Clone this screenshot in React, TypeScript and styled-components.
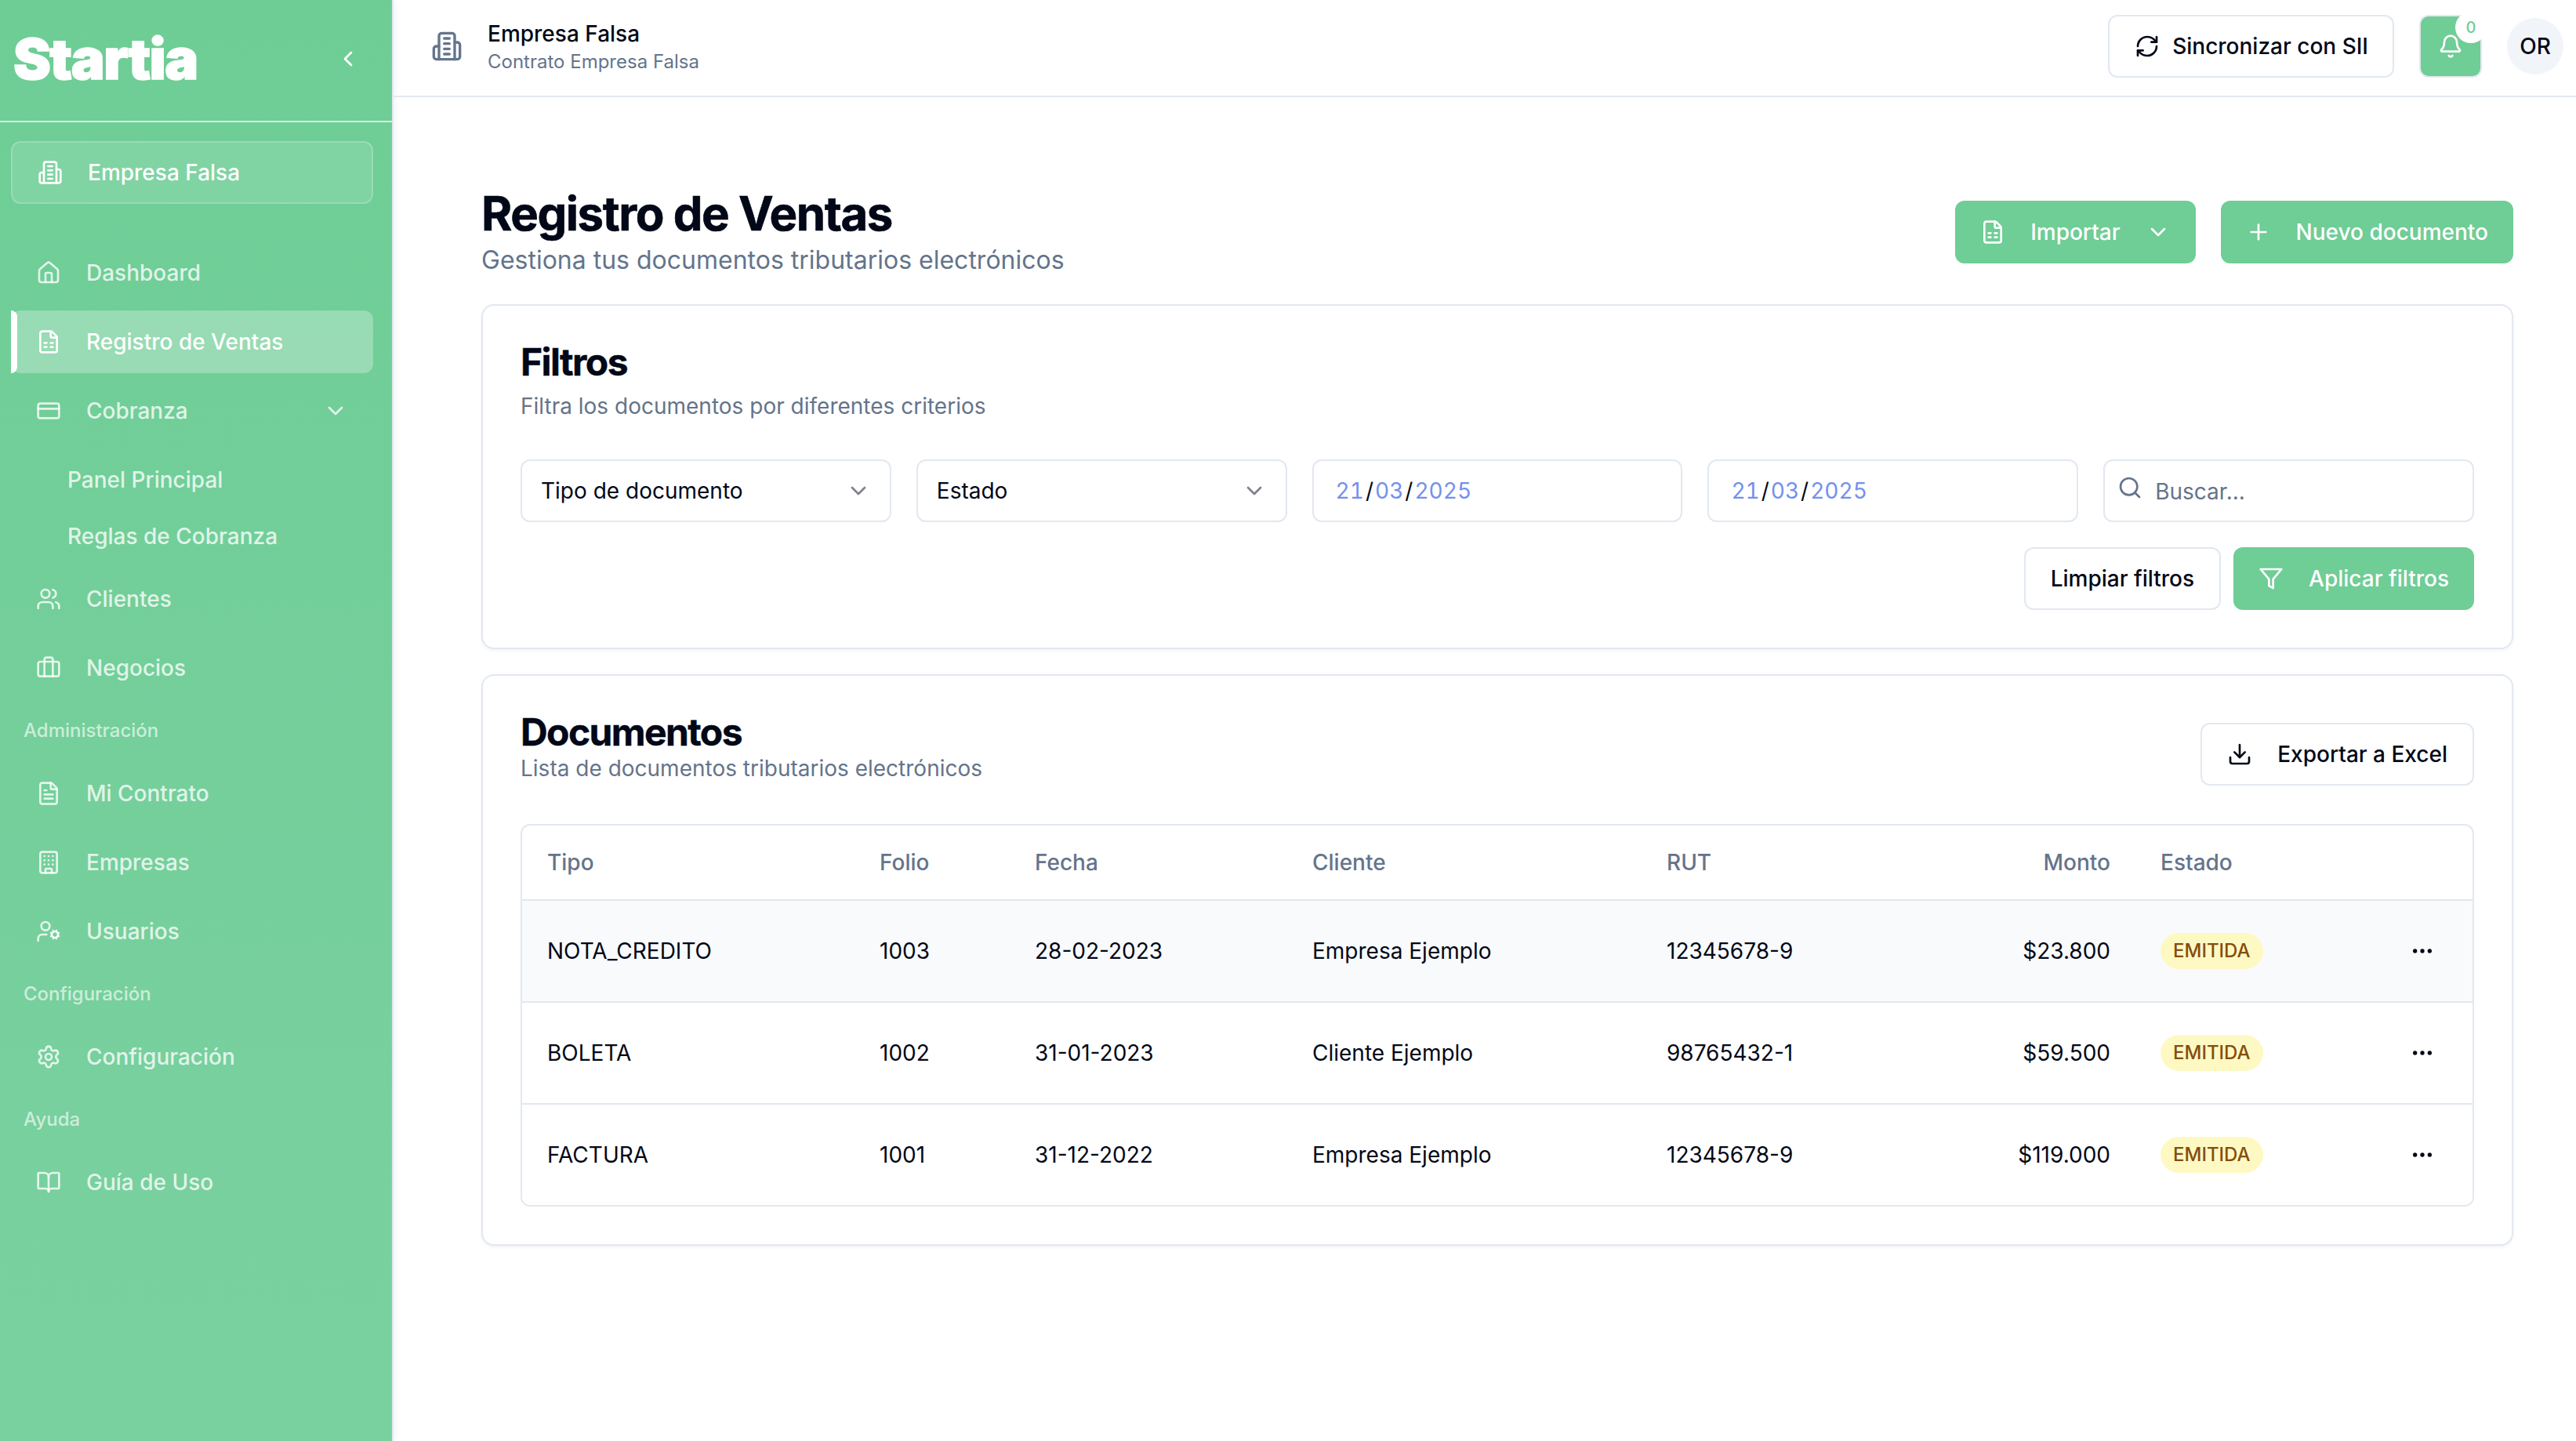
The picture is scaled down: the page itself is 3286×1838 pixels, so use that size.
import styled, { createGlobalStyle } from 'styled-components';
import {
  Bell,
  BookOpen,
  Briefcase,
  Building,
  ChevronDown,
  ChevronLeft,
  CreditCard,
  Download,
  Ellipsis,
  FileSpreadsheet,
  FileText,
  Home,
  Plus,
  RefreshCw,
  Search,
  Settings,
  UserCog,
  Users,
} from 'lucide-react';

const GREEN = '#6fcd96';
const BORDER = '#e2e8f0';
const MUTED = '#64748b';
const INK = '#020817';

const GlobalStyle = createGlobalStyle`
  * {
    box-sizing: border-box;
  }

  html,
  body {
    margin: 0;
    padding: 0;
    height: 100%;
    background: #fff;
    color: ${INK};
    font-family: Inter, "Liberation Sans", sans-serif;
    font-size: 28px;
    line-height: 40px;
  }
`;

const Page = styled.div`
  display: flex;
  height: 100vh;
  overflow: hidden;
`;

const Sidebar = styled.aside`
  flex: 0 0 502px;
  display: flex;
  flex-direction: column;
  border-right: 2px solid ${BORDER};
  background: linear-gradient(180deg, #6ecd95 0%, #7ad1a0 100%);
  background-clip: padding-box;
  box-shadow: 2px 0 8px rgba(15, 23, 42, 0.05);
  color: #fff;
  font-weight: 500;
`;

const SidebarHead = styled.div`
  flex: 0 0 156px;
  display: flex;
  align-items: center;
  justify-content: space-between;
  padding: 0 40px 4px 17px;
  border-bottom: 2px solid rgba(255, 255, 255, 0.72);
`;

const Logo = styled.div`
  font-size: 72px;
  line-height: 80px;
  font-weight: 900;
  letter-spacing: -1.6px;
  -webkit-text-stroke: 1.5px #fff;
`;

const Company = styled.div`
  display: flex;
  align-items: center;
  gap: 32px;
  height: 80px;
  margin: 24px 24px 0 14px;
  padding: 0 32px;
  border: 2px solid rgba(255, 255, 255, 0.2);
  border-radius: 12px;
  background: rgba(255, 255, 255, 0.12);
`;

const Nav = styled.nav`
  display: flex;
  flex-direction: column;
  gap: 8px;
  margin-top: 48px;
  padding: 0 24px 0 14px;
`;

const NavItem = styled.a<{ $active?: boolean }>`
  position: relative;
  display: flex;
  align-items: center;
  gap: 32px;
  height: 80px;
  padding: 0 32px;
  border-radius: 12px;
  color: ${(p) => (p.$active ? '#fff' : 'rgba(255, 255, 255, 0.8)')};
  background: ${(p) => (p.$active ? 'rgba(255, 255, 255, 0.28)' : 'transparent')};

  ${(p) =>
    p.$active &&
    `
    &::before {
      content: '';
      position: absolute;
      left: 0;
      top: 0;
      bottom: 0;
      width: 8px;
      border-radius: 0 8px 8px 0;
      background: #fff;
    }
  `}
`;

const NavCaret = styled(ChevronDown)`
  margin-left: auto;
`;

const SubNav = styled.div`
  display: flex;
  flex-direction: column;
  gap: 8px;
  padding-top: 8px;
`;

const SubItem = styled.a`
  display: flex;
  align-items: center;
  height: 64px;
  padding-left: 72px;
  color: rgba(255, 255, 255, 0.8);
`;

const NavLabel = styled.div`
  display: flex;
  align-items: center;
  height: 64px;
  padding-left: 16px;
  font-size: 24px;
  color: rgba(255, 255, 255, 0.65);
`;

const Main = styled.div`
  flex: 1;
  min-width: 0;
  display: flex;
  flex-direction: column;
`;

const TopBar = styled.header`
  flex: 0 0 124px;
  display: flex;
  align-items: center;
  justify-content: space-between;
  padding: 0 16px 4px 48px;
  border-bottom: 2px solid ${BORDER};
`;

const TopLeft = styled.div`
  display: flex;
  align-items: center;
  gap: 32px;
  color: ${MUTED};
`;

const TopName = styled.div`
  color: ${INK};
  font-weight: 500;
`;

const TopContract = styled.div`
  font-size: 24px;
  line-height: 32px;
  color: ${MUTED};
`;

const TopRight = styled.div`
  display: flex;
  align-items: center;
  gap: 32px;
`;

const Button = styled.button<{ $primary?: boolean }>`
  display: inline-flex;
  align-items: center;
  gap: 32px;
  height: 80px;
  padding: 0 32px;
  border: ${(p) => (p.$primary ? '0' : `2px solid ${BORDER}`)};
  border-radius: 12px;
  background: ${(p) => (p.$primary ? GREEN : '#fff')};
  color: ${(p) => (p.$primary ? '#fff' : INK)};
  font: inherit;
  font-weight: 500;
  white-space: nowrap;
`;

const SyncButton = styled(Button)`
  gap: 16px;
  padding: 0 31px 0 32px;
`;

const BellButton = styled(Button)`
  position: relative;
  justify-content: center;
  width: 80px;
  padding: 0;
  border: 2px solid ${BORDER};
  background: ${GREEN};
  color: #fff;
`;

const BellCount = styled.span`
  position: absolute;
  top: -6px;
  right: -8px;
  display: flex;
  align-items: center;
  justify-content: center;
  width: 40px;
  height: 40px;
  border-radius: 50%;
  background: #fff;
  color: ${GREEN};
  font-size: 20px;
  line-height: 24px;
  font-weight: 500;
`;

const Avatar = styled.div`
  display: flex;
  align-items: center;
  justify-content: center;
  width: 72px;
  height: 72px;
  border-radius: 50%;
  background: #f1f5f9;
  font-weight: 500;
`;

const Content = styled.main`
  display: flex;
  flex-direction: column;
  gap: 32px;
  padding: 112px 80px 0 112px;
`;

const PageHead = styled.div`
  display: flex;
  align-items: center;
  justify-content: space-between;
`;

const PageTitle = styled.h1`
  margin: 0;
  font-size: 60px;
  line-height: 72px;
  font-weight: 700;
  letter-spacing: -1.5px;
  -webkit-text-stroke: 0.6px ${INK};
`;

const PageSub = styled.p`
  margin: 0;
  font-size: 32px;
  line-height: 48px;
  color: ${MUTED};
`;

const Actions = styled.div`
  display: flex;
  gap: 32px;
`;

const Card = styled.section`
  padding: 48px;
  border: 2px solid ${BORDER};
  border-radius: 16px;
  background: #fff;
  box-shadow: 0 2px 4px rgba(15, 23, 42, 0.05);
`;

const CardTitle = styled.h2`
  margin: 0;
  font-size: 48px;
  line-height: 48px;
  font-weight: 700;
  letter-spacing: -1.6px;
  -webkit-text-stroke: 0.4px ${INK};
`;

const CardSub = styled.p<{ $gap: number }>`
  margin: ${(p) => p.$gap}px 0 0;
  color: ${MUTED};
`;

const FilterGrid = styled.div`
  display: grid;
  grid-template-columns: repeat(5, 1fr);
  gap: 32px;
  margin-top: 48px;
`;

const Field = styled.div`
  position: relative;
  display: flex;
  align-items: center;
  justify-content: space-between;
  height: 80px;
  padding: 0 24px;
  border: 2px solid ${BORDER};
  border-radius: 12px;
  background: #fff;
`;

const SelectCaret = styled(ChevronDown)`
  opacity: 0.5;
`;

const DateField = styled(Field)`
  justify-content: flex-start;
  padding-left: 28px;
  font-variant-numeric: tabular-nums;
`;

const DatePart = styled.span`
  color: #7490ee;
`;

const DateSlash = styled.span`
  margin: 0 2px;
`;

const SearchField = styled(Field)`
  justify-content: flex-start;
  padding-left: 64px;
  color: ${MUTED};
`;

const SearchIcon = styled(Search)`
  position: absolute;
  left: 16px;
  top: 18px;
`;

const SearchText = styled.span`
  margin-top: 2px;
`;

const FilterActions = styled.div`
  display: flex;
  justify-content: flex-end;
  gap: 16px;
  margin-top: 32px;
`;

const DocsHead = styled.div`
  display: flex;
  align-items: flex-end;
  justify-content: space-between;
  height: 92px;
  margin-bottom: 49px;
`;

const DocsTitle = styled.div`
  align-self: flex-start;
`;

const TableWrap = styled.div`
  border: 2px solid ${BORDER};
  border-radius: 12px;
  overflow: hidden;
`;

const Table = styled.table`
  width: 100%;
  table-layout: fixed;
  border-collapse: separate;
  border-spacing: 0;
`;

const Col = styled.col<{ $w: number }>`
  width: ${(p) => p.$w}px;
`;

const Th = styled.th<{ $right?: boolean }>`
  height: 94px;
  padding: 0 32px;
  text-align: ${(p) => (p.$right ? 'right' : 'left')};
  font-weight: 500;
  color: ${MUTED};
`;

const Row = styled.tr<{ $hover?: boolean }>`
  background: ${(p) => (p.$hover ? '#f8fafc' : '#fff')};
`;

const Td = styled.td<{ $right?: boolean }>`
  height: 130px;
  padding: 0 32px;
  border-top: 2px solid ${BORDER};
  text-align: ${(p) => (p.$right ? 'right' : 'left')};
`;

const Badge = styled.span`
  display: inline-flex;
  align-items: center;
  height: 46px;
  padding: 0 16px;
  border-radius: 23px;
  background: #fef9c3;
  color: #854d0e;
  font-size: 24px;
  font-weight: 500;
  vertical-align: middle;
`;

const MoreButton = styled.div`
  display: flex;
  justify-content: center;
`;

const IconSvg = styled.svg`
  flex: none;
  fill: none;
  stroke: currentColor;
  stroke-width: 2;
  stroke-linecap: round;
  stroke-linejoin: round;
`;

// the reference has the older lucide drawings of these two
const CompanyIcon = ({ size }: { size: number }) => (
  <IconSvg width={size} height={size} viewBox="0 0 24 24">
    <path d="M6 22V4a2 2 0 0 1 2-2h8a2 2 0 0 1 2 2v18Z" />
    <path d="M6 12H4a2 2 0 0 0-2 2v6a2 2 0 0 0 2 2h2" />
    <path d="M18 9h2a2 2 0 0 1 2 2v9a2 2 0 0 1-2 2h-2" />
    <path d="M10 6h4M10 10h4M10 14h4M10 18h4" />
  </IconSvg>
);

const FunnelIcon = ({ size }: { size: number }) => (
  <IconSvg width={size} height={size} viewBox="0 0 24 24">
    <polygon points="22 3 2 3 10 12.46 10 19 14 21 14 12.46 22 3" />
  </IconSvg>
);

const rows = [
  { tipo: 'NOTA_CREDITO', folio: '1003', fecha: '28-02-2023', cliente: 'Empresa Ejemplo', rut: '12345678-9', monto: '$23.800' },
  { tipo: 'BOLETA', folio: '1002', fecha: '31-01-2023', cliente: 'Cliente Ejemplo', rut: '98765432-1', monto: '$59.500' },
  { tipo: 'FACTURA', folio: '1001', fecha: '31-12-2022', cliente: 'Empresa Ejemplo', rut: '12345678-9', monto: '$119.000' },
];

const columns = [424, 198, 354, 452, 306, 324, 302, 128];

const DateValue = () => (
  <DateField>
    <DatePart>21</DatePart>
    <DateSlash>/</DateSlash>
    <DatePart>03</DatePart>
    <DateSlash>/</DateSlash>
    <DatePart>2025</DatePart>
  </DateField>
);

const App = () => {
  return (
    <>
      <GlobalStyle />
      <Page>
        <Sidebar>
          <SidebarHead>
            <Logo>Startia</Logo>
            <ChevronLeft size={32} />
          </SidebarHead>
          <Company>
            <CompanyIcon size={32} />
            Empresa Falsa
          </Company>
          <Nav>
            <NavItem><Home size={32} />Dashboard</NavItem>
            <NavItem $active><FileSpreadsheet size={32} />Registro de Ventas</NavItem>
            <NavItem><CreditCard size={32} />Cobranza<NavCaret size={32} /></NavItem>
            <SubNav>
              <SubItem>Panel Principal</SubItem>
              <SubItem>Reglas de Cobranza</SubItem>
            </SubNav>
            <NavItem><Users size={32} />Clientes</NavItem>
            <NavItem><Briefcase size={32} />Negocios</NavItem>
            <NavLabel>Administración</NavLabel>
            <NavItem><FileText size={32} />Mi Contrato</NavItem>
            <NavItem><Building size={32} />Empresas</NavItem>
            <NavItem><UserCog size={32} />Usuarios</NavItem>
            <NavLabel>Configuración</NavLabel>
            <NavItem><Settings size={32} />Configuración</NavItem>
            <NavLabel>Ayuda</NavLabel>
            <NavItem><BookOpen size={32} />Guía de Uso</NavItem>
          </Nav>
        </Sidebar>

        <Main>
          <TopBar>
            <TopLeft>
              <CompanyIcon size={40} />
              <div>
                <TopName>Empresa Falsa</TopName>
                <TopContract>Contrato Empresa Falsa</TopContract>
              </div>
            </TopLeft>
            <TopRight>
              <SyncButton><RefreshCw size={32} />Sincronizar con SII</SyncButton>
              <BellButton>
                <Bell size={32} />
                <BellCount>0</BellCount>
              </BellButton>
              <Avatar>OR</Avatar>
            </TopRight>
          </TopBar>

          <Content>
            <PageHead>
              <div>
                <PageTitle>Registro de Ventas</PageTitle>
                <PageSub>Gestiona tus documentos tributarios electrónicos</PageSub>
              </div>
              <Actions>
                <Button $primary><FileSpreadsheet size={32} />Importar<ChevronDown size={32} /></Button>
                <Button $primary><Plus size={32} />Nuevo documento</Button>
              </Actions>
            </PageHead>

            <Card>
              <CardTitle>Filtros</CardTitle>
              <CardSub $gap={12}>Filtra los documentos por diferentes criterios</CardSub>
              <FilterGrid>
                <Field>Tipo de documento<SelectCaret size={32} /></Field>
                <Field>Estado<SelectCaret size={32} /></Field>
                <DateValue />
                <DateValue />
                <SearchField>
                  <SearchIcon size={32} />
                  <SearchText>Buscar...</SearchText>
                </SearchField>
              </FilterGrid>
              <FilterActions>
                <Button>Limpiar filtros</Button>
                <Button $primary><FunnelIcon size={32} />Aplicar filtros</Button>
              </FilterActions>
            </Card>

            <Card>
              <DocsHead>
                <DocsTitle>
                  <CardTitle>Documentos</CardTitle>
                  <CardSub $gap={2}>Lista de documentos tributarios electrónicos</CardSub>
                </DocsTitle>
                <Button><Download size={32} />Exportar a Excel</Button>
              </DocsHead>
              <TableWrap>
                <Table>
                  <colgroup>
                    {columns.map((w, i) => (
                      <Col key={i} $w={w} />
                    ))}
                  </colgroup>
                  <thead>
                    <tr>
                      <Th>Tipo</Th>
                      <Th>Folio</Th>
                      <Th>Fecha</Th>
                      <Th>Cliente</Th>
                      <Th>RUT</Th>
                      <Th $right>Monto</Th>
                      <Th>Estado</Th>
                      <Th />
                    </tr>
                  </thead>
                  <tbody>
                    {rows.map((r, i) => (
                      <Row key={r.folio} $hover={i === 0}>
                        <Td>{r.tipo}</Td>
                        <Td>{r.folio}</Td>
                        <Td>{r.fecha}</Td>
                        <Td>{r.cliente}</Td>
                        <Td>{r.rut}</Td>
                        <Td $right>{r.monto}</Td>
                        <Td><Badge>EMITIDA</Badge></Td>
                        <Td><MoreButton><Ellipsis size={32} /></MoreButton></Td>
                      </Row>
                    ))}
                  </tbody>
                </Table>
              </TableWrap>
            </Card>
          </Content>
        </Main>
      </Page>
    </>
  );
};

export default App;
